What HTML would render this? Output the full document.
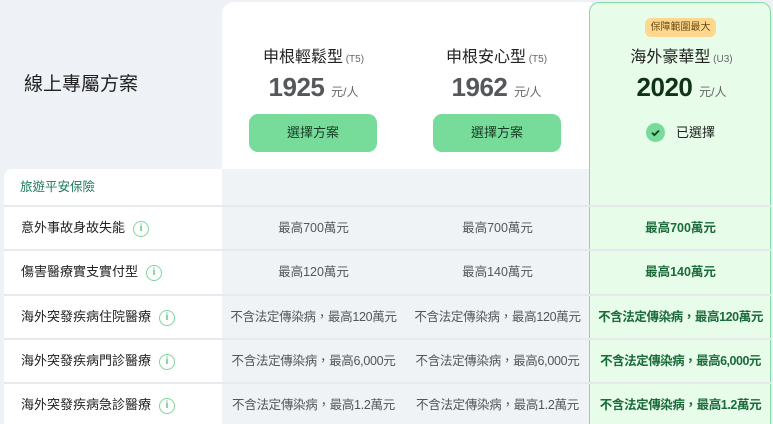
<!DOCTYPE html><html><head><meta charset="utf-8"><style>
*{margin:0;padding:0;box-sizing:border-box}
html,body{width:773px;height:424px;overflow:hidden}
body{background:#eef2f6;font-family:"Liberation Sans","Noto Sans CJK TC",sans-serif;position:relative;color:#222}
.a{position:absolute}
.c{text-align:center}
.hdr{left:222px;top:2px;width:370px;height:167px;background:#fff;border-radius:12px 0 0 0}
.left{left:4px;top:169px;width:218px;height:255px;background:#fff;border-radius:8px 0 0 0}
.mid{left:222px;top:169px;width:368px;height:255px;background:#eff3f6}
.green{left:589px;top:2px;width:182px;height:430px;background:#e8fcea;border:1.5px solid #86d9a2;border-radius:10px 10px 0 0}
.line{height:2px;background:#e6eaee;left:4px;width:767px}
.name{font-size:16px;color:#222;width:183px}
.name small{font-size:10px;color:#666}
.price{font-size:26px;font-weight:bold;color:#55575b;width:183px;letter-spacing:-0.5px}
.price span{font-size:12px;font-weight:normal;letter-spacing:0;color:#666}
.btn{width:128px;height:38px;background:#77dc9a;border-radius:9px;font-size:13px;line-height:38px;text-align:center;color:#183b25}
.lab{left:21px;font-size:13px;color:#222;height:20px;line-height:20px}
.i{display:inline-block;width:16px;height:16px;border:1.5px solid #7ed69b;border-radius:50%;color:#5cc47e;font-size:10px;line-height:13px;text-align:center;vertical-align:middle;margin-left:8px;font-weight:bold}
.v{font-size:12.5px;color:#555;text-align:center;height:20px;line-height:20px}
.g{font-size:12.5px;color:#1a6a3a;font-weight:bold;text-align:center;height:20px;line-height:20px}
</style></head><body>
<div class="a hdr"></div>
<div class="a left"></div>
<div class="a mid"></div>
<div class="a green"></div>
<div class="a line" style="top:205px"></div>
<div class="a line" style="top:249px"></div>
<div class="a line" style="top:294px"></div>
<div class="a line" style="top:338px"></div>
<div class="a line" style="top:382px"></div>

<div class="a" style="left:24px;top:69px;font-size:19px;color:#222">線上專屬方案</div>

<div class="a c name" style="left:222px;top:43px">申根輕鬆型<small> (T5)</small></div>
<div class="a c price" style="left:222px;top:72px">1925 <span>元/人</span></div>
<div class="a btn" style="left:249px;top:114px">選擇方案</div>

<div class="a c name" style="left:405px;top:43px">申根安心型<small> (T5)</small></div>
<div class="a c price" style="left:405px;top:72px">1962 <span>元/人</span></div>
<div class="a btn" style="left:433px;top:114px">選擇方案</div>

<div class="a" style="left:645px;top:18px;width:71px;height:19px;background:#fdd88e;border-radius:6px;font-size:10px;line-height:19px;text-align:center;color:#6b4a12">保障範圍最大</div>
<div class="a c name" style="left:590px;top:43px">海外豪華型<small> (U3)</small></div>
<div class="a c price" style="left:590px;top:72px;color:#0f3318">2020 <span>元/人</span></div>
<div class="a" style="left:646px;top:123px;width:19px;height:19px;border-radius:50%;background:#77dc9a"><svg width="19" height="19"><path d="M6 9.7l2.4 2.4 4.6-4.6" stroke="#183b25" stroke-width="1.8" fill="none"/></svg></div>
<div class="a" style="left:676px;top:123px;font-size:13px;line-height:19px;color:#222">已選擇</div>

<div class="a" style="left:20px;top:177px;font-size:12.5px;color:#1d7a5a;line-height:20px">旅遊平安保險</div>

<div class="a lab" style="top:218px">意外事故身故失能<span class="i">i</span></div>
<div class="a lab" style="top:262px">傷害醫療實支實付型<span class="i">i</span></div>
<div class="a lab" style="top:307px">海外突發疾病住院醫療<span class="i">i</span></div>
<div class="a lab" style="top:351px">海外突發疾病門診醫療<span class="i">i</span></div>
<div class="a lab" style="top:395px">海外突發疾病急診醫療<span class="i">i</span></div>

<div class="a v" style="left:222px;width:183px;top:218px">最高700萬元</div>
<div class="a v" style="left:405px;width:185px;top:218px">最高700萬元</div>
<div class="a g" style="left:590px;width:181px;top:218px">最高700萬元</div>
<div class="a v" style="left:222px;width:183px;top:262px">最高120萬元</div>
<div class="a v" style="left:405px;width:185px;top:262px">最高140萬元</div>
<div class="a g" style="left:590px;width:181px;top:262px">最高140萬元</div>
<div class="a v" style="left:218px;width:191px;top:307px;letter-spacing:-0.3px">不含法定傳染病，最高120萬元</div>
<div class="a v" style="left:403px;width:189px;top:307px;letter-spacing:-0.3px">不含法定傳染病，最高120萬元</div>
<div class="a g" style="left:589px;width:183px;top:307px;letter-spacing:-0.4px">不含法定傳染病，最高120萬元</div>
<div class="a v" style="left:218px;width:191px;top:351px;letter-spacing:-0.3px">不含法定傳染病，最高6,000元</div>
<div class="a v" style="left:403px;width:189px;top:351px;letter-spacing:-0.3px">不含法定傳染病，最高6,000元</div>
<div class="a g" style="left:589px;width:183px;top:351px;letter-spacing:-0.5px">不含法定傳染病，最高6,000元</div>
<div class="a v" style="left:218px;width:191px;top:395px;letter-spacing:-0.3px">不含法定傳染病，最高1.2萬元</div>
<div class="a v" style="left:403px;width:189px;top:395px;letter-spacing:-0.3px">不含法定傳染病，最高1.2萬元</div>
<div class="a g" style="left:589px;width:183px;top:395px;letter-spacing:-0.4px">不含法定傳染病，最高1.2萬元</div>
</body></html>
